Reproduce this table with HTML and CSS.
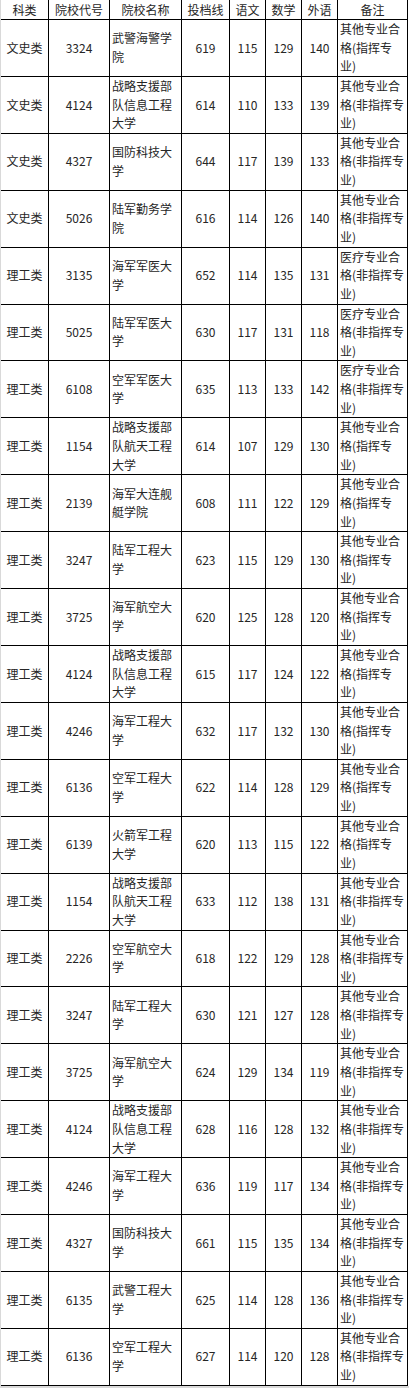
FILE: index.html
```html
<!DOCTYPE html>
<html lang="zh-CN">
<head>
<meta charset="utf-8">
<title>院校投档线</title>
<link rel="stylesheet" href="styles.css">
</head>
<body>
<div class="page">
  <div class="sheet">
    <div class="grid">
      <div class="c h">科类</div><div class="c h">院校代号</div><div class="c h">院校名称</div><div class="c h">投档线</div><div class="c h">语文</div><div class="c h">数学</div><div class="c h">外语</div><div class="c h">备注</div>

      <div class="c">文史类</div><div class="c">3324</div><div class="c name">武警海警学院</div><div class="c">619</div><div class="c">115</div><div class="c">129</div><div class="c">140</div><div class="c note">其他专业合格(指挥专业)</div>
      <div class="c">文史类</div><div class="c">4124</div><div class="c name">战略支援部队信息工程大学</div><div class="c">614</div><div class="c">110</div><div class="c">133</div><div class="c">139</div><div class="c note">其他专业合格(非指挥专业)</div>
      <div class="c">文史类</div><div class="c">4327</div><div class="c name">国防科技大学</div><div class="c">644</div><div class="c">117</div><div class="c">139</div><div class="c">133</div><div class="c note">其他专业合格(非指挥专业)</div>
      <div class="c">文史类</div><div class="c">5026</div><div class="c name">陆军勤务学院</div><div class="c">616</div><div class="c">114</div><div class="c">126</div><div class="c">140</div><div class="c note">其他专业合格(非指挥专业)</div>
      <div class="c">理工类</div><div class="c">3135</div><div class="c name">海军军医大学</div><div class="c">652</div><div class="c">114</div><div class="c">135</div><div class="c">131</div><div class="c note">医疗专业合格(非指挥专业)</div>
      <div class="c">理工类</div><div class="c">5025</div><div class="c name">陆军军医大学</div><div class="c">630</div><div class="c">117</div><div class="c">131</div><div class="c">118</div><div class="c note">医疗专业合格(非指挥专业)</div>
      <div class="c">理工类</div><div class="c">6108</div><div class="c name">空军军医大学</div><div class="c">635</div><div class="c">113</div><div class="c">133</div><div class="c">142</div><div class="c note">医疗专业合格(非指挥专业)</div>
      <div class="c">理工类</div><div class="c">1154</div><div class="c name">战略支援部队航天工程大学</div><div class="c">614</div><div class="c">107</div><div class="c">129</div><div class="c">130</div><div class="c note">其他专业合格(指挥专业)</div>
      <div class="c">理工类</div><div class="c">2139</div><div class="c name">海军大连舰艇学院</div><div class="c">608</div><div class="c">111</div><div class="c">122</div><div class="c">129</div><div class="c note">其他专业合格(指挥专业)</div>
      <div class="c">理工类</div><div class="c">3247</div><div class="c name">陆军工程大学</div><div class="c">623</div><div class="c">115</div><div class="c">129</div><div class="c">130</div><div class="c note">其他专业合格(指挥专业)</div>
      <div class="c">理工类</div><div class="c">3725</div><div class="c name">海军航空大学</div><div class="c">620</div><div class="c">125</div><div class="c">128</div><div class="c">120</div><div class="c note">其他专业合格(指挥专业)</div>
      <div class="c">理工类</div><div class="c">4124</div><div class="c name">战略支援部队信息工程大学</div><div class="c">615</div><div class="c">117</div><div class="c">124</div><div class="c">122</div><div class="c note">其他专业合格(指挥专业)</div>
      <div class="c">理工类</div><div class="c">4246</div><div class="c name">海军工程大学</div><div class="c">632</div><div class="c">117</div><div class="c">132</div><div class="c">130</div><div class="c note">其他专业合格(指挥专业)</div>
      <div class="c">理工类</div><div class="c">6136</div><div class="c name">空军工程大学</div><div class="c">622</div><div class="c">114</div><div class="c">128</div><div class="c">129</div><div class="c note">其他专业合格(指挥专业)</div>
      <div class="c">理工类</div><div class="c">6139</div><div class="c name">火箭军工程大学</div><div class="c">620</div><div class="c">113</div><div class="c">115</div><div class="c">122</div><div class="c note">其他专业合格(指挥专业)</div>
      <div class="c">理工类</div><div class="c">1154</div><div class="c name">战略支援部队航天工程大学</div><div class="c">633</div><div class="c">112</div><div class="c">138</div><div class="c">131</div><div class="c note">其他专业合格(非指挥专业)</div>
      <div class="c">理工类</div><div class="c">2226</div><div class="c name">空军航空大学</div><div class="c">618</div><div class="c">122</div><div class="c">129</div><div class="c">128</div><div class="c note">其他专业合格(非指挥专业)</div>
      <div class="c">理工类</div><div class="c">3247</div><div class="c name">陆军工程大学</div><div class="c">630</div><div class="c">121</div><div class="c">127</div><div class="c">128</div><div class="c note">其他专业合格(非指挥专业)</div>
      <div class="c">理工类</div><div class="c">3725</div><div class="c name">海军航空大学</div><div class="c">624</div><div class="c">129</div><div class="c">134</div><div class="c">119</div><div class="c note">其他专业合格(非指挥专业)</div>
      <div class="c">理工类</div><div class="c">4124</div><div class="c name">战略支援部队信息工程大学</div><div class="c">628</div><div class="c">116</div><div class="c">128</div><div class="c">132</div><div class="c note">其他专业合格(非指挥专业)</div>
      <div class="c">理工类</div><div class="c">4246</div><div class="c name">海军工程大学</div><div class="c">636</div><div class="c">119</div><div class="c">117</div><div class="c">134</div><div class="c note">其他专业合格(非指挥专业)</div>
      <div class="c">理工类</div><div class="c">4327</div><div class="c name">国防科技大学</div><div class="c">661</div><div class="c">115</div><div class="c">135</div><div class="c">134</div><div class="c note">其他专业合格(非指挥专业)</div>
      <div class="c">理工类</div><div class="c">6135</div><div class="c name">武警工程大学</div><div class="c">625</div><div class="c">114</div><div class="c">128</div><div class="c">136</div><div class="c note">其他专业合格(非指挥专业)</div>
      <div class="c">理工类</div><div class="c">6136</div><div class="c name">空军工程大学</div><div class="c">627</div><div class="c">114</div><div class="c">120</div><div class="c">128</div><div class="c note">其他专业合格(非指挥专业)</div>
    </div>
  </div>
</div>
</body>
</html>
```

FILE: styles.css
```css
html, body {
  margin: 0;
  padding: 0;
  background: #ffffff;
}

.page {
  width: 409px;
  height: 1388px;
  background: #d9d9d9;
  box-sizing: border-box;
  padding-left: 1px;
}

.sheet {
  width: 408px;
  background: #ffffff;
  padding-right: 1px;
  box-sizing: border-box;
}

.grid {
  display: grid;
  grid-template-columns: 47px 60px 71px 47px 35px 35px 35px 69px;
  grid-template-rows: 19px repeat(24, 55.92px);
  gap: 1px;
  background: #000000;
  border-right: 1px solid #000000;
  border-bottom: 1px solid #000000;
  width: 407px;
  box-sizing: border-box;
  font-family: "Noto Sans CJK SC", "Noto Sans", sans-serif;
  font-size: 12px;
  line-height: 18.64px;
  color: #262626;
}

.c {
  background: #ffffff;
  display: flex;
  align-items: center;
  justify-content: center;
  text-align: center;
  overflow: hidden;
}

.h {
  line-height: 19px;
}

.name,
.note {
  justify-content: flex-start;
  text-align: left;
  padding: 0 0 0 2px;
}

.note {
  align-items: flex-start;
}
```
